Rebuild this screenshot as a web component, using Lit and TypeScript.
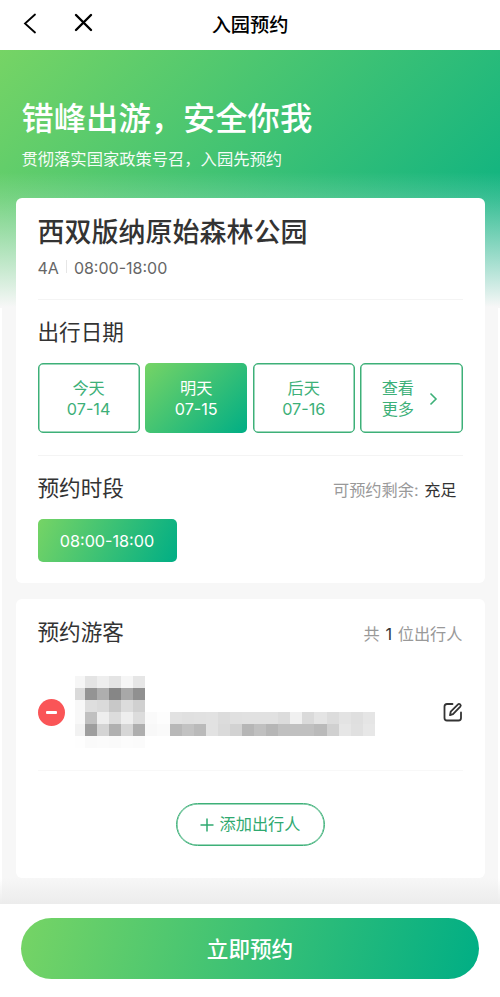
import { LitElement, html, css, svg } from "lit";
import { customElement } from "lit/decorators.js";
import { classMap } from "lit/directives/class-map.js";

const DAYS = [
  { label: "今天", date: "07-14", active: false },
  { label: "明天", date: "07-15", active: true },
  { label: "后天", date: "07-16", active: false },
];

// Grey levels of the masked visitor details, one row per line of blocks.
const MASK: number[][] = [
  [246, 228, 238, 228, 246, 230],
  [218, 148, 174, 134, 168, 144],
  [248, 222, 218, 200, 220, 208],
  [248, 192, 238, 220, 238, 220, 250, 253, 226, 224, 225, 226, 220, 224, 225, 225, 225, 220, 240, 218, 228, 220, 227, 223, 229],
  [242, 158, 212, 176, 214, 174, 248, 250, 184, 194, 186, 226, 218, 210, 182, 192, 182, 192, 192, 192, 186, 208, 230, 224, 231],
  [254, 250, 251, 250, 252, 251],
];

@customElement("masked-info")
class MaskedInfo extends LitElement {
  static styles = css`
    :host { display: grid; grid-template-columns: 10px repeat(24, 12.08px); grid-auto-rows: 12.1px; }
  `;
  render() {
    return MASK.map((row) =>
      Array.from({ length: 25 }, (_, i) => {
        const v = row[i] ?? 255;
        return html`<span style="background:rgb(${v},${v},${v})"></span>`;
      })
    );
  }
}

@customElement("app-root")
class AppRoot extends LitElement {
  static styles = css`
    :host {
      display: flex; flex-direction: column; height: 997px; overflow: hidden;
      font-family: Inter, "Noto Sans CJK SC", sans-serif; color: #333;
      background: #fff; --grad: #76d465, #00ae85; --green: #3db078;
    }
    * { box-sizing: border-box; }
    svg { display: block; fill: none; stroke: currentColor; }
    .nav { height: 50px; flex: none; display: grid; grid-template-columns: 1fr auto 1fr; align-items: center; color: #000; }
    .nav-icons { display: flex; align-items: center; padding: 0 0 4px 22px; gap: 34px; }
    .nav-title { font-size: 19.2px; line-height: 28px; font-weight: 500; }
    .page {
      height: 854px; flex: none; padding: 50px 15.5px 0 15.5px;
      background:
        linear-gradient(to bottom, rgba(247,247,247,0) 0 122px, rgba(247,247,247,.17) 148px, rgba(247,247,247,.5) 192px, #f7f7f7 257px) 0 0 / 100% 258px no-repeat,
        linear-gradient(135deg, var(--grad)) 0 0 / 100% 258px no-repeat,
        linear-gradient(to top, #ececec, rgba(247,247,247,0) 26px),
        linear-gradient(to right, #fff 2px, #f7f7f7 2px 498px, #fff 498px);
    }
    .hero { color: #fff; padding-left: 6px; height: 98px; }
    .hero h1 { margin: 0; font-size: 32.3px; line-height: 38px; font-weight: 500; }
    .hero p { margin: 11px 0 0; font-size: 16.3px; line-height: 20px; opacity: .95; }
    .card { background: #fff; border-radius: 6px; padding: 0 22px; }
    .booking { height: 385px; }
    .place { height: 102px; padding-top: 15px; border-bottom: 1px solid #f4f4f4; }
    .place h2 { margin: 0; font-size: 27px; line-height: 40px; font-weight: 500; }
    .meta { display: flex; align-items: center; gap: 7px; margin-top: 5px; color: #666; font-size: 16px; line-height: 21px; }
    .bar { width: 1px; height: 13px; background: #e6e6e6; margin-bottom: 4px; }
    h3 { margin: 0; font-size: 21.6px; line-height: 30px; font-weight: 400; }
    .dates { height: 156px; padding-top: 17px; border-bottom: 1px solid #f4f4f4; }
    .days { display: grid; grid-template-columns: repeat(4, 1fr); gap: 5.3px; margin-top: 16px; }
    .day {
      height: 70px; border: 1px solid var(--green); box-shadow: inset 0 0 0 .5px var(--green);
      border-radius: 5px; color: var(--green);
      display: flex; align-items: center; justify-content: center; text-align: center;
      font-size: 16.2px; line-height: 21px; padding-top: 2px;
    }
    .day.active { border: 0; box-shadow: none; background: linear-gradient(135deg, var(--grad)); color: #fff; }
    .more { gap: 15px; padding: 2px 3px 0 0; }
    .more svg { margin-top: -1px; }
    .head { display: flex; justify-content: space-between; align-items: center; }
    .slot-head { padding: 17px 6px 0 0; }
    .note { font-size: 16.2px; line-height: 22px; color: #999; padding-top: 4px; }
    .note b { color: #333; font-weight: 400; }
    .slot-head b { margin-left: 1px; }
    .slot {
      width: 139px; height: 43px; margin-top: 16px; border-radius: 5px; color: #fff;
      background: linear-gradient(115deg, var(--grad)); font-size: 16.2px;
      display: flex; align-items: center; justify-content: center; padding-top: 1px;
    }
    .visitors { height: 279px; margin-top: 16px; }
    .visitor-head { padding-top: 18px; }
    .visitor-head b { margin: 0 1.2px; }
    .visitor { height: 124px; display: flex; align-items: center; border-bottom: 1px solid #f8f8f8; padding-top: 7px; }
    .remove { width: 27px; height: 27px; border-radius: 50%; background: #fa5557; display: grid; place-items: center; margin-right: 10.5px; flex: none; }
    .remove i { width: 11px; height: 3px; border-radius: 1px; background: #fff; }
    .edit { margin-left: auto; color: #333; }
    .add {
      width: 149px; height: 43px; margin: 32px auto 0; border: 1px solid var(--green); border-radius: 22px;
      box-shadow: inset 0 0 0 .5px var(--green);
      display: flex; align-items: center; justify-content: center; gap: 6px; color: #2fa970; font-size: 16.2px; line-height: 22px;
    }
    .add span { margin-top: -1px; }
    .footer { flex: 1; padding: 14px 21px 0; background: #fff; }
    .submit {
      height: 61px; border-radius: 31px; background: linear-gradient(105deg, var(--grad)); color: #fff; padding-bottom: 2px;
      display: flex; align-items: center; justify-content: center; font-size: 21.6px; font-weight: 500;
    }
  `;

  render() {
    return html`
      <header class="nav">
        <div class="nav-icons">
          <svg width="18" height="22" viewBox="0 0 18 22" stroke-width="1.8" stroke-linecap="round">${svg`<path d="M13 2.500 3 11.500 13 20.500"/>`}</svg>
          <svg width="19" height="20" viewBox="0 0 19 20" stroke-width="2.4" stroke-linecap="round">${svg`<path d="M2 2 17 17M17 2 2 17"/>`}</svg>
        </div>
        <div class="nav-title">入园预约</div>
      </header>
      <main class="page">
        <section class="hero">
          <h1>错峰出游，安全你我</h1>
          <p>贯彻落实国家政策号召，入园先预约</p>
        </section>
        <section class="card booking">
          <div class="place">
            <h2>西双版纳原始森林公园</h2>
            <div class="meta"><span>4A</span><span class="bar"></span><span>08:00-18:00</span></div>
          </div>
          <div class="dates">
            <h3>出行日期</h3>
            <div class="days">
              ${DAYS.map((d) => html`<div class=${classMap({ day: true, active: d.active })}>${d.label}<br />${d.date}</div>`)}
              <div class="day more">
                <span>查看<br />更多</span>
                <svg width="9" height="14" viewBox="0 0 9 14" stroke-width="1.6">${svg`<path d="M1.500 1.500 7 7 1.500 12.500"/>`}</svg>
              </div>
            </div>
          </div>
          <div class="head slot-head">
            <h3>预约时段</h3>
            <div class="note">可预约剩余: <b>充足</b></div>
          </div>
          <div class="slot">08:00-18:00</div>
        </section>
        <section class="card visitors">
          <div class="head visitor-head">
            <h3>预约游客</h3>
            <div class="note">共 <b>1</b> 位出行人</div>
          </div>
          <div class="visitor">
            <span class="remove"><i></i></span>
            <masked-info></masked-info>
            <svg class="edit" width="20" height="20" viewBox="0 0 20 20" stroke-width="1.8" stroke-linecap="round" stroke-linejoin="round">
              ${svg`<path d="M9.500 2H4Q1.500 2 1.500 4.500V16Q1.500 18.500 4 18.500H15.500Q18 18.500 18 16V10.500"/><path d="M7 13.200 7.700 9.700 15 2.300Q16 1.300 17.200 2.400 18.300 3.500 17.300 4.600L10 12.200Z"/>`}
            </svg>
          </div>
          <div class="add">
            <svg width="14" height="14" viewBox="0 0 14 14" stroke-width="1.5">${svg`<path d="M7 .5v13M.5 7h13"/>`}</svg>
            <span>添加出行人</span>
          </div>
        </section>
      </main>
      <footer class="footer"><div class="submit">立即预约</div></footer>
    `;
  }
}
